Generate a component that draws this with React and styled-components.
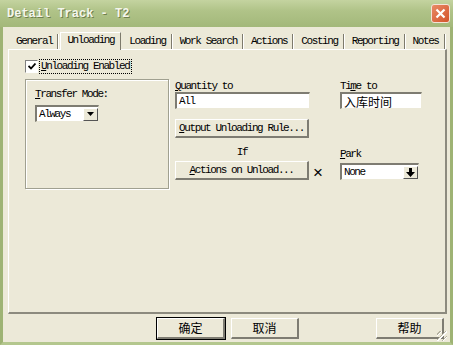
import React from 'react'
import styled, { createGlobalStyle } from 'styled-components'

const Global = createGlobalStyle`
  html, body { margin: 0; padding: 0; background: #ece9d8; }
  body { width: 453px; height: 345px; overflow: hidden; }
`

const mono = `"Liberation Mono", "DejaVu Sans Mono", monospace`
const cjk = `"Noto Sans CJK SC", "Liberation Sans", sans-serif`

const Window = styled.div`
  width: 453px;
  height: 345px;
  box-sizing: border-box;
  display: flex;
  flex-direction: column;
  background: #ece9d8;
  border-left: 3px solid #9eb374;
  border-right: 3px solid #9eb374;
  border-bottom: 3px solid #b4c78e;
  font-family: ${mono};
  font-size: 11px;
  letter-spacing: -1.4px;
  white-space: nowrap;
  color: #000;
`
const TitleBar = styled.div`
  height: 27px;
  margin: 0 -3px;
  padding: 0 3px 0 7px;
  display: flex;
  align-items: center;
  background: linear-gradient(#c4d3a0, #b0c388 40%, #a3b87a);
`
const Title = styled.span`
  flex: 1;
  font-weight: bold;
  font-size: 12px;
  letter-spacing: 0;
  color: #f4f6ec;
  text-shadow: 1px 1px 0 #6f7f4e;
`
const CloseBtn = styled.div`
  width: 19px;
  height: 19px;
  box-sizing: border-box;
  border: 1px solid #f3e2d8;
  border-radius: 3px;
  background: linear-gradient(135deg, #e88a66, #d4532b);
  display: flex;
  align-items: center;
  justify-content: center;
`
const Body = styled.div`
  flex: 1;
  display: flex;
  flex-direction: column;
  padding: 4px 3px 0 5px;
`
const TabStrip = styled.div`
  display: flex;
  align-items: flex-end;
  height: 18px;
  padding-left: 2px;
`
const Tab = styled.div`
  height: ${({ active }) => (active ? 18 : 15)}px;
  line-height: 15px;
  padding: 0 ${({ active }) => (active ? 6 : 5)}px 0 6px;
  box-sizing: border-box;
  border-top: ${({ active }) => (active ? '1px solid #fff' : 'none')};
  border-left: ${({ active }) => (active ? '1px solid #fff' : 'none')};
  border-right: 1px solid #7d7a6c;
  box-shadow: ${({ active }) => (active ? 'none' : '1px 0 0 #fff')};
  margin-right: 2px;
  background: #ece9d8;
  position: relative;
  z-index: ${({ active }) => (active ? 1 : 0)};
  margin-bottom: ${({ active }) => (active ? -1 : 0)}px;
`
const Panel = styled.div`
  height: 265px;
  box-sizing: border-box;
  border-top: 1px solid #fff;
  border-left: 1px solid #fff;
  border-right: 2px solid #8c8a7e;
  border-bottom: 2px solid #8c8a7e;
  padding: 9px 0 0 16px;
  display: flex;
  flex-direction: column;
`
const CheckRow = styled.label`
  display: flex;
  align-items: center;
  height: 15px;
`
const CheckBox = styled.span`
  width: 11px;
  height: 11px;
  border: 1px solid #fff;
  border-top-color: #808080;
  border-left-color: #808080;
  background: #fff;
  margin-right: 1px;
  display: flex;
  align-items: center;
  justify-content: center;
`
const Focus = styled.span`
  border: 1px dotted #000;
  padding: 0 2px 0 1px;
  line-height: 13px;
`
const U = styled.span`
  text-decoration: underline;
`
const MainRow = styled.div`
  display: flex;
  margin-top: 5px;
`
const GroupBox = styled.div`
  width: 133px;
  height: 102px;
  border: 1px solid #a0a090;
  box-shadow: 1px 1px 0 #fff, inset 1px 1px 0 #fff;
  padding: 6px 0 0 9px;
`
const Label = styled.div`
  line-height: 12px;
  margin-top: ${({ top }) => top || 0}px;
  text-align: ${({ center }) => (center ? 'center' : 'left')};
`
const Sunken = styled.div`
  box-sizing: border-box;
  width: ${({ w }) => w}px;
  height: 17px;
  margin-top: ${({ top }) => top || 0}px;
  background: #fff;
  border-top: 2px solid #7e7c72;
  border-left: 2px solid #7e7c72;
  border-right: 1px solid #ece9d8;
  border-bottom: 1px solid #ece9d8;
  display: flex;
  align-items: center;
  padding-left: 2px;
  font-family: ${({ cn }) => (cn ? cjk : mono)};
  font-size: ${({ cn }) => (cn ? 12 : 11)}px;
  letter-spacing: ${({ cn }) => (cn ? 0 : -1.4)}px;
`
const DropBtn = styled.span`
  margin-left: auto;
  width: 15px;
  height: 13px;
  box-sizing: border-box;
  background: #ece9d8;
  border: 1px solid #fff;
  border-right-color: #555;
  border-bottom-color: #555;
  display: flex;
  align-items: center;
  justify-content: center;
`
const Col = styled.div`
  display: flex;
  flex-direction: column;
  margin-left: ${({ left }) => left}px;
  padding-top: 1px;
`
const Button = styled.div`
  box-sizing: border-box;
  width: ${({ w }) => w}px;
  height: ${({ h }) => h || 19}px;
  margin-top: ${({ top }) => top || 0}px;
  background: #ece9d8;
  border-top: 1px solid #fff;
  border-left: 1px solid #fff;
  border-right: 2px solid #7e7c72;
  border-bottom: 2px solid #7e7c72;
  outline: ${({ def }) => (def ? '1px solid #000' : 'none')};
  display: flex;
  align-items: center;
  justify-content: center;
  font-family: ${({ cn }) => (cn ? cjk : mono)};
  font-size: ${({ cn }) => (cn ? 12 : 11)}px;
  letter-spacing: ${({ cn }) => (cn ? 0 : -1.4)}px;
`
const ActionRow = styled.div`
  display: flex;
  align-items: flex-end;
`
const Cross = styled.span`
  margin-left: 4px;
  font-family: "Liberation Sans", sans-serif;
  font-size: 17px;
  letter-spacing: 0;
  line-height: 15px;
`
const Footer = styled.div`
  display: flex;
  align-items: center;
  height: 28px;
  padding-right: 3px;
`
const Grip = styled.div`
  width: 10px;
  height: 10px;
  margin: 16px -3px 0 -7px;
  background: repeating-linear-gradient(135deg, transparent 0 2px, #b5b2a0 2px 3px, #fff 3px 4px);
`

const Drop = () => (
  <svg width="7" height="4" viewBox="0 0 7 4"><path d="M0 0h7L3.5 4z" fill="#000" /></svg>
)

export default function App() {
  const tabs = ['General', 'Unloading', 'Loading', 'Work Search', 'Actions', 'Costing', 'Reporting', 'Notes']
  return (
    <Window>
      <Global />
      <TitleBar>
        <Title>Detail Track - T2</Title>
        <CloseBtn>
          <svg width="11" height="11" viewBox="0 0 11 11">
            <path d="M1.5 1.5l8 8M9.5 1.5l-8 8" stroke="#fff" strokeWidth="2.2" />
          </svg>
        </CloseBtn>
      </TitleBar>
      <Body>
        <TabStrip>
          {tabs.map(t => <Tab key={t} active={t === 'Unloading'}>{t}</Tab>)}
        </TabStrip>
        <Panel>
          <CheckRow>
            <CheckBox>
              <svg width="8" height="7" viewBox="0 0 8 7"><path d="M0.5 3l2.5 2.5 4.5-5" stroke="#000" strokeWidth="1.8" fill="none" /></svg>
            </CheckBox>
            <Focus><U>U</U>nloading Enabled</Focus>
          </CheckRow>
          <MainRow>
            <GroupBox>
              <Label top={2}><U>T</U>ransfer Mode:</Label>
              <Sunken w={64} top={5}>Always<DropBtn><Drop /></DropBtn></Sunken>
            </GroupBox>
            <Col left={6}>
              <Label><U>Q</U>uantity to</Label>
              <Sunken w={135} top={0}>All</Sunken>
              <Button w={134} top={10}><U>O</U>utput Unloading Rule...</Button>
              <Label center top={8} style={{ width: 134 }}>If</Label>
              <ActionRow>
                <Button w={134} top={3}><U>A</U>ctions on Unload...</Button>
                <Cross>×</Cross>
              </ActionRow>
            </Col>
            <Col left={17}>
              <Label>Ti<U>m</U>e to</Label>
              <Sunken w={82} top={0} cn>入库时间</Sunken>
              <Label top={39}><U>P</U>ark</Label>
              <Sunken w={79} top={3}>None<DropBtn><svg width="9" height="9" viewBox="0 0 9 9"><path d="M3 0h3v4h3L4.5 9 0 4h3z" fill="#000" /></svg></DropBtn></Sunken>
            </Col>
          </MainRow>
        </Panel>
        <Footer>
          <Button w={68} h={21} cn def style={{ marginLeft: 149 }}>确定</Button>
          <Button w={68} h={21} cn style={{ marginLeft: 6 }}>取消</Button>
          <Button w={68} h={21} cn style={{ marginLeft: 'auto' }}>帮助</Button>
          <Grip />
        </Footer>
      </Body>
    </Window>
  )
}
